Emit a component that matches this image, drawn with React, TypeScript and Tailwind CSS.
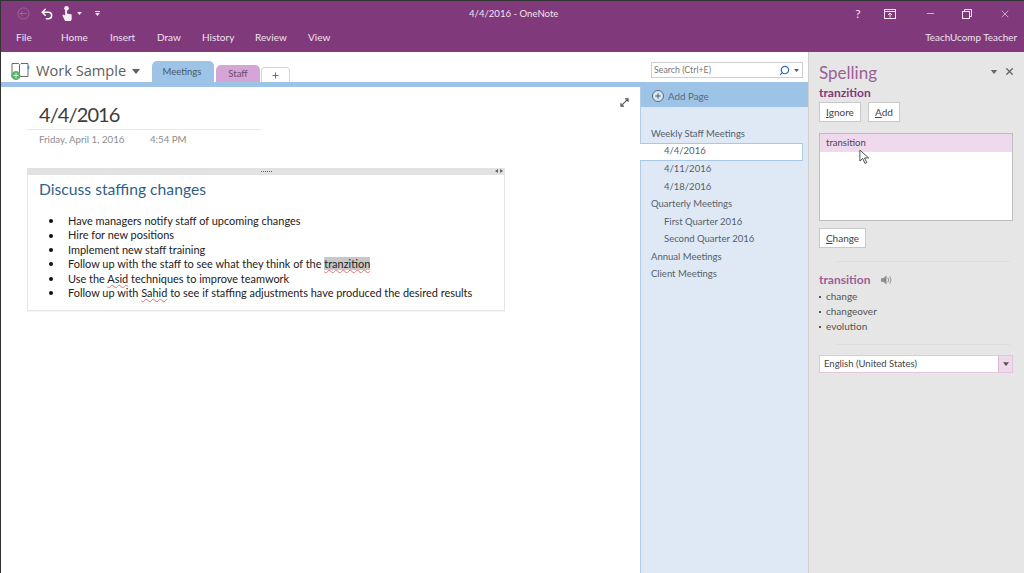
import React from "react";
import { Plus, Search, Undo2, X, Minus } from "lucide-react";

const ribbonTabs = [
  { label: "Home", width: "w-[49px]" },
  { label: "Insert", width: "w-[47px]" },
  { label: "Draw", width: "w-[45px]" },
  { label: "History", width: "w-[53px]" },
  { label: "Review", width: "w-[53px]" },
  { label: "View", width: "w-[40px]" },
];

const bullets = [
  <>Have managers notify staff of upcoming changes</>,
  <>Hire for new positions</>,
  <>Implement new staff training</>,
  <>
    Follow up with the staff to see what they think of the{" "}
    <span className="bg-[#c8c8c8] underline underline-offset-[1px] decoration-wavy decoration-[#e07070] decoration-1">tranzition</span>
  </>,
  <>
    Use the <span className="underline underline-offset-[1px] decoration-wavy decoration-[#e07070] decoration-1">Asid</span> techniques to improve teamwork
  </>,
  <>
    Follow up with <span className="underline underline-offset-[1px] decoration-wavy decoration-[#e07070] decoration-1">Sahid</span> to see if staffing adjustments have produced the desired results
  </>,
];

const pages = [
  { label: "Weekly Staff Meetings", sub: false },
  { label: "4/4/2016", sub: true, active: true },
  { label: "4/11/2016", sub: true },
  { label: "4/18/2016", sub: true },
  { label: "Quarterly Meetings", sub: false },
  { label: "First Quarter 2016", sub: true },
  { label: "Second Quarter 2016", sub: true },
  { label: "Annual Meetings", sub: false },
  { label: "Client Meetings", sub: false },
];

function Caret({ className }: { className: string }) {
  return (
    <svg viewBox="0 0 8 5" className={className} fill="currentColor">
      <path d="M0 0h8L4 5z" />
    </svg>
  );
}

function TitleBar() {
  return (
    <div className="h-[51px] shrink-0 bg-[#80397b] text-[#f3e6f1] flex flex-col">
      <div className="h-[25px] flex items-center relative">
        <div className="flex items-center pl-[16px]">
          <svg viewBox="0 0 14 14" className="w-[13px] h-[13px] text-[#a36a9f]" fill="none" stroke="currentColor" strokeWidth="1">
            <circle cx="7" cy="7" r="6" />
            <path d="M10.500 7h-7M6 4.500 3.500 7 6 9.500" />
          </svg>
          <Undo2 className="w-[14px] h-[14px] ml-[10px] text-white" strokeWidth={2.500} />
          <svg viewBox="0 0 12 16" className="w-[12px] h-[15px] ml-[7px] text-[#f5ecf4]" fill="currentColor">
            <rect x="3" y="0" width="5" height="5" rx="2.500" />
            <path d="M4 4h2v4l5 1v5l-1 2H4L1 10l1-1 2 1z" />
          </svg>
          <Caret className="w-[5px] h-[3px] ml-[4px]" />
          <div className="flex flex-col items-center gap-[1px] ml-[13px]">
            <div className="w-[5px] h-[1px] bg-[#e8d5e6]" />
            <Caret className="w-[5px] h-[3px]" />
          </div>
        </div>
        <span className="absolute left-[468px] top-[5px] text-[9.600px] leading-[16px] text-[#f0e2ee]">4/4/2016 - OneNote</span>
        <div className="ml-auto flex items-center pr-[13px]">
          <span className="text-[12px] w-[12px] mr-[20px] text-center">?</span>
          <svg viewBox="0 0 12 10" className="w-[12px] h-[10px] mr-[29px]" fill="none" stroke="currentColor">
            <rect x="0.500" y="0.500" width="11" height="9" />
            <path d="M0 2.500h12M6 8.500V4M4 6l2-2 2 2" />
          </svg>
          <Minus className="w-[11px] h-[11px] mr-[26px]" strokeWidth={1.500} />
          <svg viewBox="0 0 10 10" className="w-[10px] h-[10px] mr-[27px]" fill="none" stroke="currentColor">
            <rect x="0.500" y="2.500" width="7" height="7" />
            <path d="M2.500 2.500v-2h7v7h-2" />
          </svg>
          <X className="w-[12px] h-[12px]" strokeWidth={1.250} />
        </div>
      </div>
      <div className="flex-1 flex items-center pb-[4px] text-[10px] text-[#f1e3ef]">
        <span className="w-[60px] pl-[15px]">File</span>
        {ribbonTabs.map((tab) => (
          <span key={tab.label} className={tab.width}>
            {tab.label}
          </span>
        ))}
        <span className="ml-auto pr-[7px] text-[9.900px]">TeachUcomp Teacher</span>
      </div>
    </div>
  );
}

function NotebookBar() {
  return (
    <div className="h-[35px] shrink-0 bg-white flex flex-col">
      <div className="h-[30px] flex items-end relative">
        <div className="self-stretch flex items-center pl-[9px] w-[151px] pt-[8px]">
          <svg viewBox="0 0 20 20" className="w-[20px] h-[20px] shrink-0" fill="none">
            <path d="M2 2.500h6.500l1 1v13H2z" stroke="#6a6a6a" />
            <path d="M10 3.500l1-1h7v13h-8" stroke="#6a6a6a" />
            <path d="M18.500 5v3" stroke="#3a8fd0" strokeWidth="1.500" />
            <circle cx="6" cy="14.500" r="4.500" fill="#5cb46c" />
            <path d="M3.500 14.500h5M6 12v5" stroke="#e8f5ea" />
          </svg>
          <span className="ml-[6px] text-[14.600px] text-[#606060] font-['Open_Sans',sans-serif] whitespace-nowrap">Work Sample</span>
          <Caret className="w-[8px] h-[5px] ml-[6px] text-[#606060] shrink-0" />
        </div>
        <div className="w-[62px] h-[21px] pt-[2px] pr-[2px] bg-[#9dc3e6] rounded-t-[5px] flex items-center justify-center text-[9.500px] text-[#4a5a6a]">Meetings</div>
        <div className="w-[44px] h-[17px] pt-[2px] ml-[2px] bg-[#d5a5d5] rounded-t-[5px] flex items-center justify-center text-[9.500px] text-[#6a4a6a]">Staff</div>
        <div className="w-[29px] h-[15px] ml-[1px] bg-white border border-b-0 border-[#d4d4d4] rounded-t-[4px] flex items-center justify-center">
          <Plus className="w-[9px] h-[9px] text-[#666666]" strokeWidth={2.500} />
        </div>
        <div className="ml-auto mr-[5px] mb-[4px] w-[152px] h-[16px] bg-white border border-[#cfcfcf] flex items-center pl-[2px] pr-[3px] text-[8.800px] text-[#777777]">
          <span>Search (Ctrl+E)</span>
          <Search className="ml-auto w-[11px] h-[11px] text-[#2a6fb0] -scale-x-100" strokeWidth={2.500} />
          <Caret className="w-[5px] h-[3px] ml-[4px] text-[#555555]" />
        </div>
      </div>
      <div className="h-[5px] bg-[#9dc3e6]" />
    </div>
  );
}

function NotePage() {
  return (
    <div className="flex-1 min-w-0 bg-white relative pt-[14px] pl-[26px]">
      <svg viewBox="0 0 10 10" className="absolute right-[11px] top-[11px] w-[9px] h-[9px] text-[#555555]" fill="none" stroke="currentColor" strokeWidth="1.200">
        <path d="M1.500 8.500l7-7M5.500 1h3.500v3.500M1 5.500v3.500h3.500" />
      </svg>
      <div className="w-[234px]">
        <div className="pl-[12px] text-[20px] tracking-[-0.900px] leading-[26px] text-[#3c3c3c]">4/4/2016</div>
        <div className="h-[1px] mt-[2px] bg-[#e8e8e8]" />
        <div className="pl-[12px] mt-[2px] flex text-[9.700px] leading-[14px] text-[#8c8c8c]">
          <span className="w-[111px]">Friday, April 1, 2016</span>
          <span>4:54 PM</span>
        </div>
      </div>
      <div className="w-[478px] mt-[22px] h-[143px] border border-t-0 border-[#e6e6e6] flex flex-col shadow-[0_1px_1px_rgba(0,0,0,0.04)]">
        <div className="h-[7px] shrink-0 -mx-[1px] bg-[#e2e2e2] flex items-center justify-center relative">
          <div className="w-[11px] h-[1px] border-t border-dotted border-[#666666]" />
          <span className="absolute right-[2px] top-[1px] flex gap-[2px]">
            <span className="w-0 h-0 border-y-[2.500px] border-y-transparent border-r-[3px] border-r-[#666666]" />
            <span className="w-0 h-0 border-y-[2.500px] border-y-transparent border-l-[3px] border-l-[#666666]" />
          </span>
        </div>
        <div className="pl-[11px] pt-[3px] text-[15.700px] leading-[22px] text-[#2f5f8a]">Discuss staffing changes</div>
        <ul className="mt-[14px] pl-[21px] text-[10.950px] leading-[14.400px] text-[#222222]">
          {bullets.map((item, i) => (
            <li key={i} className="flex items-center whitespace-pre">
              <span className="w-[4px] h-[4px] rounded-full bg-[#111111] mr-[15px] shrink-0" />
              <span>{item}</span>
            </li>
          ))}
        </ul>
      </div>
    </div>
  );
}

function PageList() {
  return (
    <div className="w-[168px] shrink-0 bg-[#dfe9f5] border-l border-[#b4cde6] flex flex-col">
      <div className="h-[20px] pb-[2px] bg-[#9dc3e6] flex items-center pl-[11px] text-[9.800px] text-[#5a6a7a]">
        <span className="w-[12px] h-[12px] rounded-full bg-white/60 border border-[#5a6a7a] flex items-center justify-center mr-[4px]">
          <Plus className="w-[8px] h-[8px] text-[#4a5a6a]" strokeWidth={3} />
        </span>
        Add Page
      </div>
      <div className="mt-[18px] flex flex-col text-[9.500px] text-[#555f69]">
        {pages.map((page) => (
          <div
            key={page.label}
            className={
              page.active
                ? "h-[18px] -ml-[1px] mr-[5px] pl-[24px] flex items-center bg-white border border-l-0 border-[#a9c8e6]"
                : page.sub
                  ? "h-[17.500px] pl-[23px] flex items-center"
                  : "h-[17.500px] pl-[10px] flex items-center"
            }
          >
            {page.label}
          </div>
        ))}
      </div>
    </div>
  );
}

function SpellingPane() {
  return (
    <div className="w-[216px] shrink-0 bg-[#e6e6e6] border-l border-[#d0d0d0] pl-[10px] pr-[10px] relative flex flex-col">
      <div className="absolute right-[9px] top-[14px] flex items-center gap-[6px] text-[#666666]">
        <Caret className="w-[8px] h-[4px]" />
        <X className="w-[11px] h-[11px]" strokeWidth={3} />
      </div>
      <div className="mt-[8px] text-[17px] leading-[25px] text-[#9a5f97]">Spelling</div>
      <div className="text-[12px] leading-[15px] font-bold text-[#80397b]">tranzition</div>
      <div className="flex gap-[7px] mt-[2px]">
        <button className="w-[42px] h-[20px] bg-white border border-[#c9c9c9] text-[10px] text-[#444444]">
          <span className="underline">I</span>gnore
        </button>
        <button className="w-[32px] h-[20px] bg-white border border-[#c9c9c9] text-[10px] text-[#444444]">
          <span className="underline">A</span>dd
        </button>
      </div>
      <div className="mt-[11px] w-[194px] h-[88px] bg-white border border-[#bdbdbd] shrink-0">
        <div className="h-[18px] bg-[#efd9ec] pl-[6px] flex items-center text-[9.500px] text-[#55405a]">transition</div>
      </div>
      <svg viewBox="0 0 12 17" className="absolute left-[50px] top-[97px] w-[11px] h-[16px]" fill="white" stroke="#444444" strokeWidth="1">
        <path d="M1 1v12l3-3 2.500 5.500 2-1L6 9.500h4.500z" />
      </svg>
      <button className="mt-[7px] w-[47px] h-[20px] bg-white border border-[#c9c9c9] text-[10px] text-[#444444]">
        <span className="underline">C</span>hange
      </button>
      <div className="h-[1px] mt-[13px] ml-[16px] mr-[4px] bg-[#dedede]" />
      <div className="mt-[9px] flex items-center text-[12px] leading-[18px] font-bold text-[#9a5f97]">
        transition
        <svg viewBox="0 0 12 10" className="ml-[11px] w-[11px] h-[10px] text-[#8c8c8c]" fill="currentColor">
          <path d="M0 3h2.500L6 0v10L2.500 7H0z" />
          <path d="M7.500 2.500q2 2.500 0 5M9.500 1q3 4 0 8" fill="none" stroke="currentColor" />
        </svg>
      </div>
      <ul className="text-[10px] leading-[15px] text-[#555555]">
        {["change", "changeover", "evolution"].map((word) => (
          <li key={word} className="flex items-center">
            <span className="w-[2px] h-[2px] bg-[#555555] mr-[5px]" />
            {word}
          </li>
        ))}
      </ul>
      <div className="h-[1px] mt-[10px] ml-[16px] mr-[4px] bg-[#dedede]" />
      <div className="mt-[10px] w-[194px] h-[18px] bg-white border border-[#e3c6e0] flex items-center pl-[4px] text-[9.500px] text-[#444444]">
        English (United States)
        <span className="ml-auto w-[14px] h-full bg-[#efd9ec] border-l border-[#d8b8d5] flex items-center justify-center">
          <Caret className="w-[6px] h-[4px] text-[#555555]" />
        </span>
      </div>
    </div>
  );
}

export default function App() {
  return (
    <div className="w-[1024px] h-[573px] overflow-hidden flex flex-col bg-white border-t border-l border-[#333333] font-['Lato',sans-serif]">
      <TitleBar />
      <div className="flex-1 min-h-0 flex">
        <div className="flex-1 min-w-0 flex flex-col">
          <NotebookBar />
          <div className="flex-1 min-h-0 flex">
            <NotePage />
            <PageList />
          </div>
        </div>
        <SpellingPane />
      </div>
    </div>
  );
}
